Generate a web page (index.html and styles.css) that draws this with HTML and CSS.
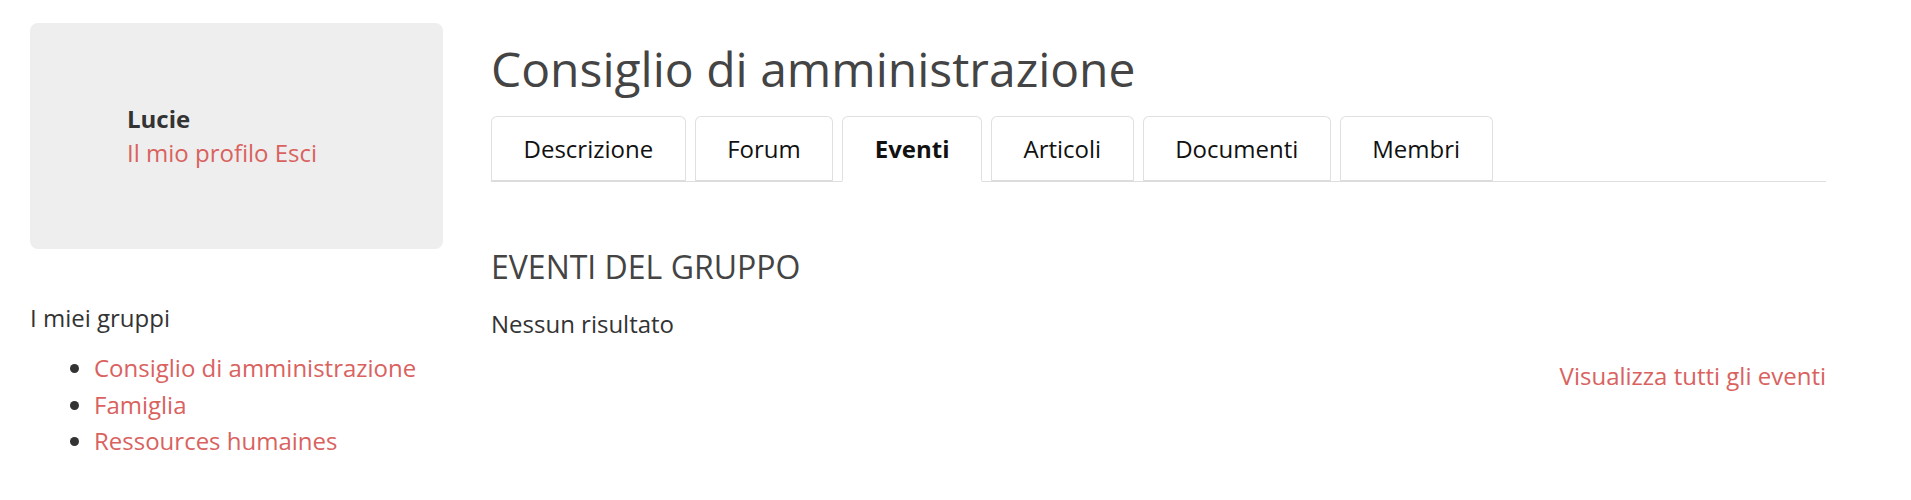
FILE: index.html
```html
<!DOCTYPE html>
<html lang="it">
<head>
<meta charset="utf-8">
<title>Consiglio di amministrazione</title>
<link rel="stylesheet" href="styles.css">
</head>
<body>
<div class="page">
  <aside class="sidebar">
    <div class="user-card">
      <div class="user-info">
        <div class="user-name">Lucie</div>
        <div class="user-links"><a href="#">Il mio profilo</a> <a href="#">Esci</a></div>
      </div>
    </div>
    <div class="groups-title">I miei gruppi</div>
    <ul class="groups-list">
      <li><a href="#">Consiglio di amministrazione</a></li>
      <li><a href="#">Famiglia</a></li>
      <li><a href="#">Ressources humaines</a></li>
    </ul>
  </aside>
  <main class="main">
    <h1 class="title">Consiglio di amministrazione</h1>
    <nav class="tabs">
      <a class="tab" href="#">Descrizione</a>
      <a class="tab" href="#">Forum</a>
      <a class="tab active" href="#">Eventi</a>
      <a class="tab" href="#">Articoli</a>
      <a class="tab" href="#">Documenti</a>
      <a class="tab" href="#">Membri</a>
    </nav>
    <section class="events">
      <h2 class="section-title">EVENTI DEL GRUPPO</h2>
      <p class="empty">Nessun risultato</p>
      <div class="more"><a href="#">Visualizza tutti gli eventi</a></div>
    </section>
  </main>
</div>
</body>
</html>
```

FILE: styles.css
```css
html, body {
  margin: 0;
  padding: 0;
  background: #fff;
}
body {
  font-family: "Open Sans", "Liberation Sans", sans-serif;
  font-size: 24px;
  line-height: 1.43;
  color: #333;
}
a {
  color: #d9625f;
  text-decoration: none;
}
.page {
  display: flex;
  gap: 48px;
  padding: 23px 85px 0 30px;
}
.sidebar {
  flex: none;
  width: 413px;
}
.user-card {
  height: 226px;
  background: #eeeeee;
  border-radius: 8px;
  display: flex;
  align-items: center;
  padding-left: 97px;
  box-sizing: border-box;
}
.user-name {
  font-weight: 700;
  color: #333;
}
.groups-title {
  margin-top: 52px;
  color: #333;
}
.groups-list {
  margin: 15px 0 0;
  padding-left: 64px;
}
.groups-list li {
  line-height: 36.5px;
}
.main {
  flex: 1;
  min-width: 0;
}
.title {
  margin: 20px 0 20px;
  font-size: 48px;
  font-weight: 400;
  line-height: 1.1;
  color: #444;
}
.tabs {
  display: flex;
  gap: 9px;
  border-bottom: 1px solid #dedede;
}
.tab {
  display: block;
  padding: 15px 31.5px 14px;
  border: 1px solid #e0e0e0;
  border-bottom: 2px solid #dcdcdc;
  border-radius: 6px 6px 0 0;
  margin-bottom: -1px;
  color: #111;
  background: #fff;
}
.tab.active {
  font-weight: 700;
  border-bottom-color: #fff;
}
.events {
  padding-top: 67px;
}
.section-title {
  margin: 0;
  font-size: 32px;
  font-weight: 400;
  line-height: 1.1;
  color: #444;
}
.empty {
  margin: 23px 0 0;
  color: #333;
}
.more {
  text-align: right;
  margin-top: 17px;
}
```
